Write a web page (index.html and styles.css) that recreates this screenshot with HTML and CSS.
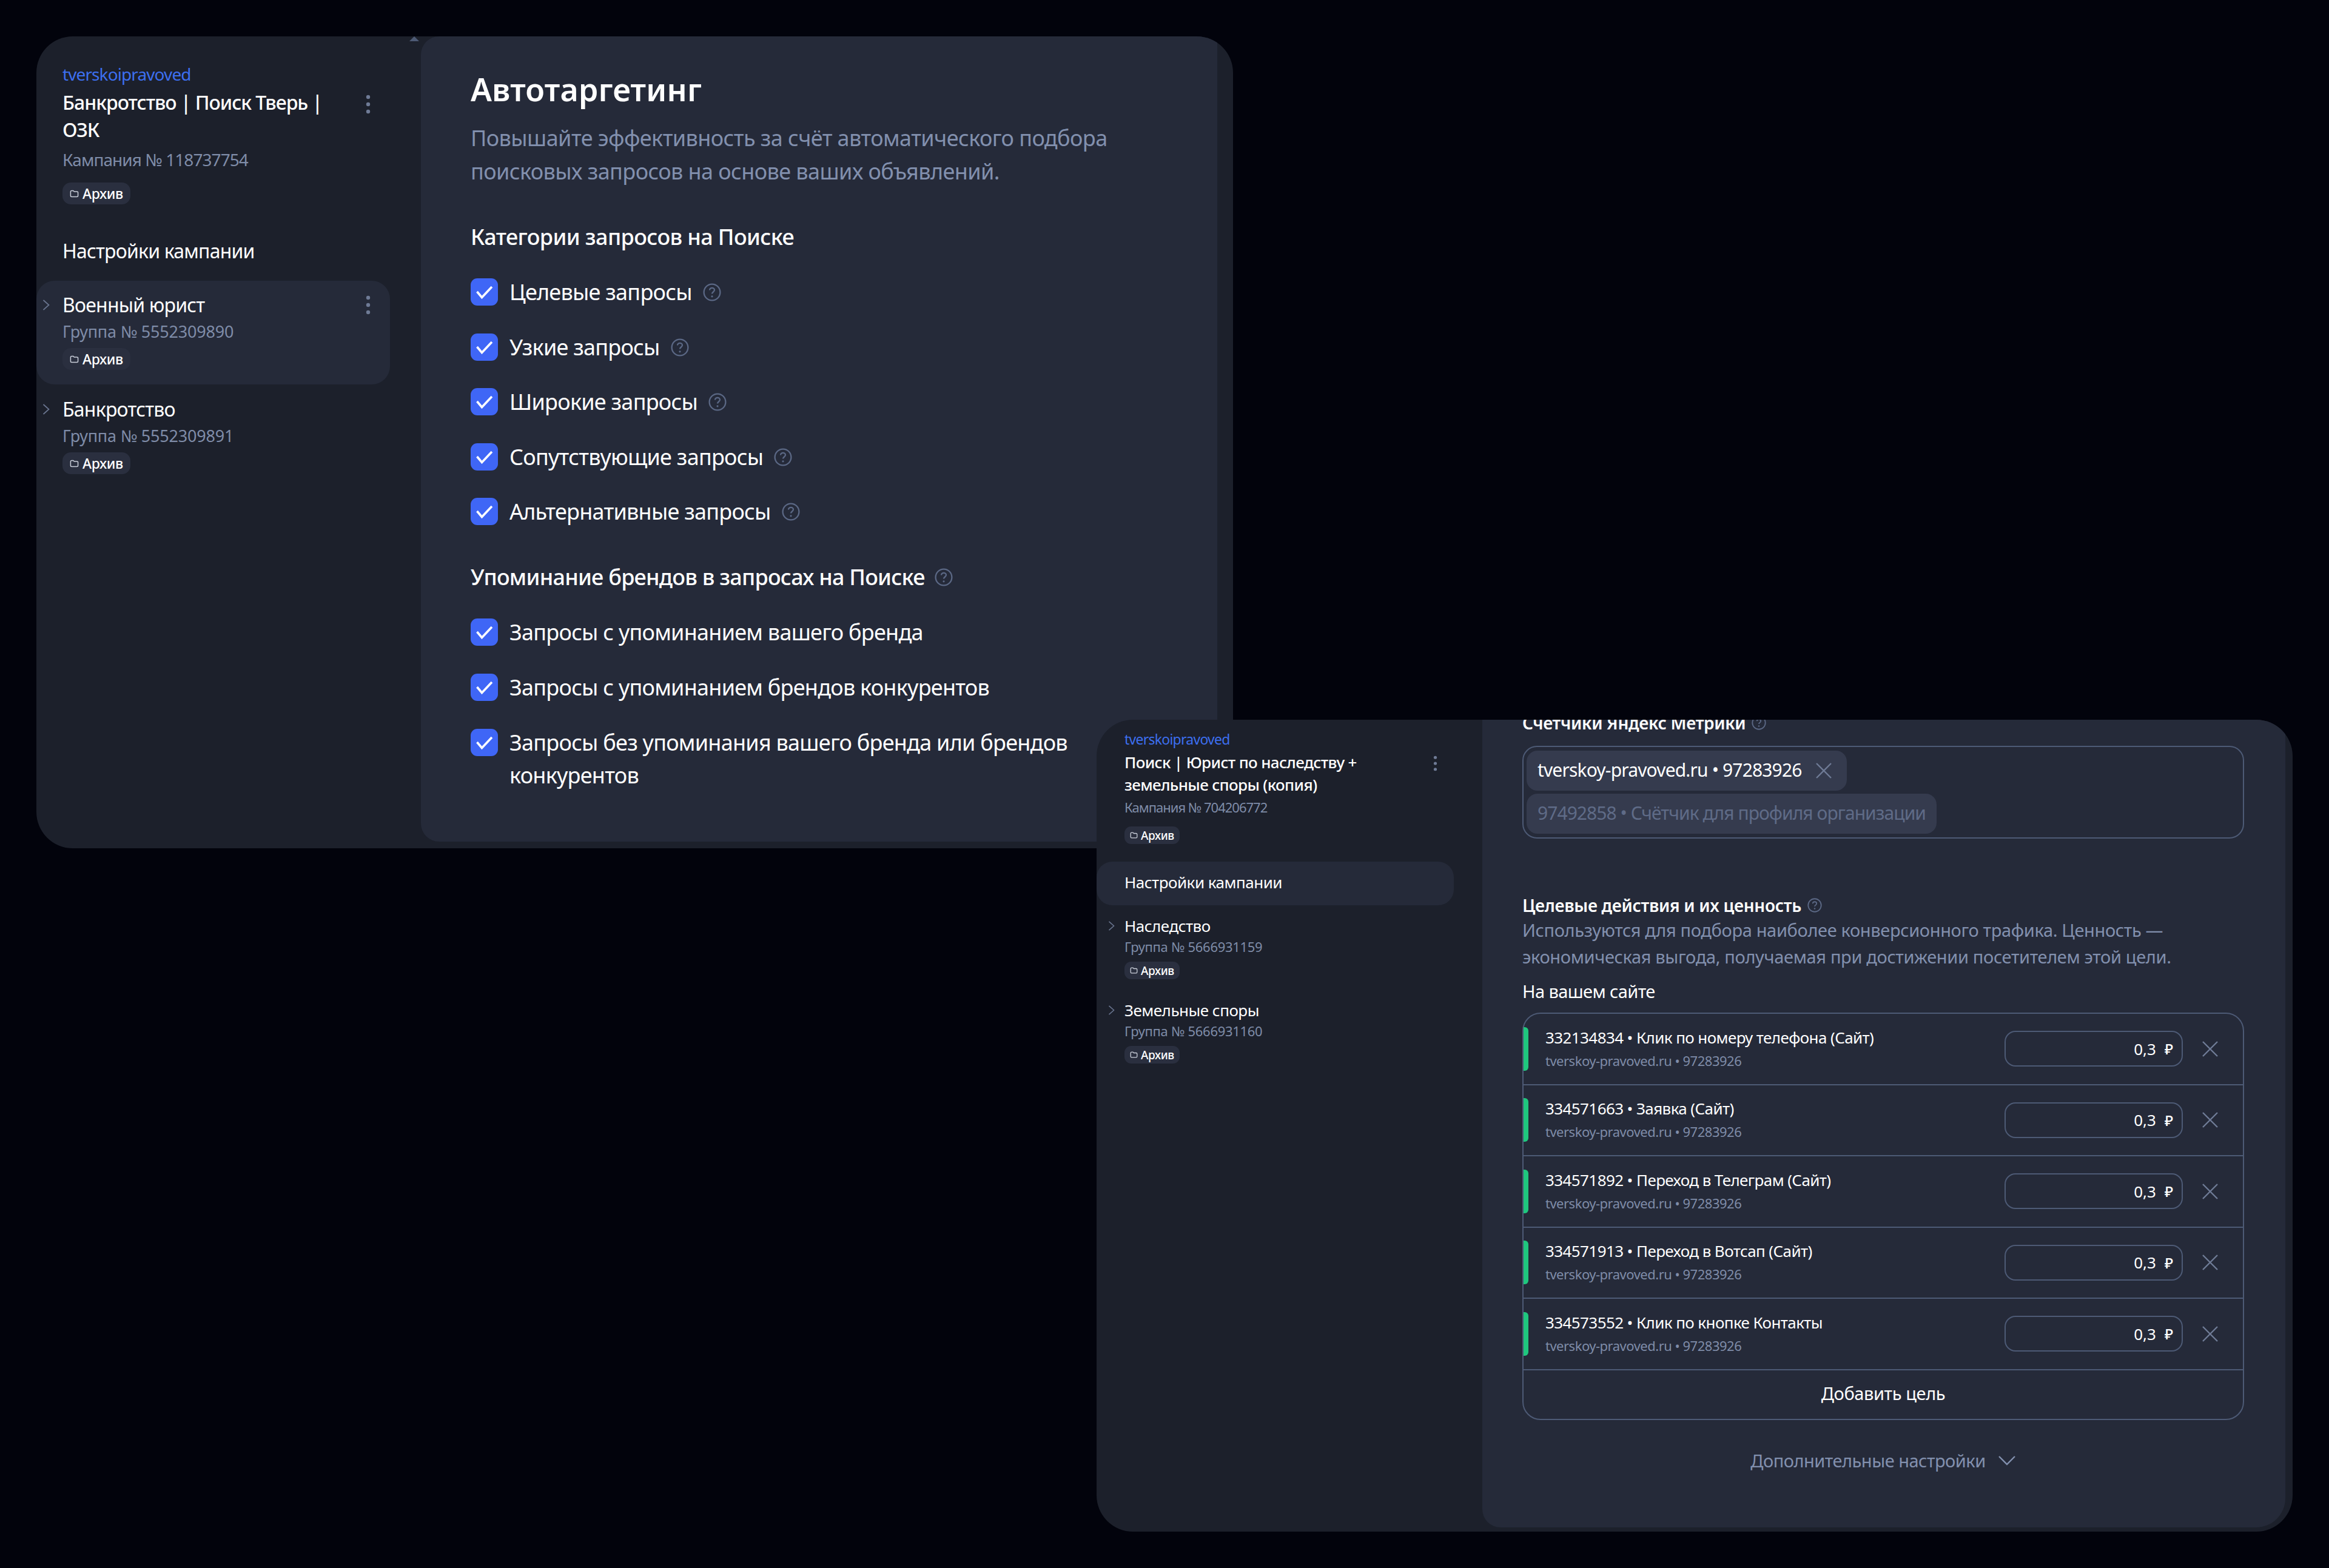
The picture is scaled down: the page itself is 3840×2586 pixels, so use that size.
FILE: index.html
```html
<!DOCTYPE html>
<html lang="ru">
<head>
    <meta charset="UTF-8">
    <title>Автотаргетинг</title>
    <link rel="stylesheet" href="styles.css">
</head>
<body>
    <svg class="sprite" xmlns="http://www.w3.org/2000/svg">
        <symbol id="folder" viewBox="0 0 16 16"><path d="M1.5 4.5C1.5 3.4 2.3 2.6 3.4 2.6h2.8l1.6 1.7h4.8c1 0 1.9.8 1.9 1.8v5.3c0 1-.9 1.9-1.9 1.9H3.4c-1.1 0-1.9-.9-1.9-1.9z" fill="none" stroke="currentColor" stroke-width="1.6"/></symbol>
        <symbol id="chevron-right" viewBox="0 0 12 18"><path d="M1.5 1l9 8-9 8" fill="none" stroke="currentColor" stroke-width="1.7"/></symbol>
        <symbol id="chevron-down" viewBox="0 0 30 18"><path d="M2 2l13 13L28 2" fill="none" stroke="currentColor" stroke-width="2.4"/></symbol>
        <symbol id="kebab" viewBox="0 0 8 32"><circle cx="4" cy="4" r="3.2" fill="currentColor"/><circle cx="4" cy="16" r="3.2" fill="currentColor"/><circle cx="4" cy="28" r="3.2" fill="currentColor"/></symbol>
        <symbol id="check" viewBox="0 0 45 45"><path d="M10.5 22l8 9.5L35 14" fill="none" stroke="currentColor" stroke-width="3.6"/></symbol>
        <symbol id="help" viewBox="0 0 30 30"><circle cx="15" cy="15" r="13.4" fill="none" stroke="currentColor" stroke-width="2.3"/><path d="M11 11.6c0-2.3 1.8-3.8 4-3.8s4 1.4 4 3.5c0 3.2-4 3.2-4 6.3" fill="none" stroke="currentColor" stroke-width="2.3"/><circle cx="15" cy="21.8" r="1.6" fill="currentColor"/></symbol>
        <symbol id="cross" viewBox="0 0 28 28"><path d="M2 2l24 24M26 2L2 26" fill="none" stroke="currentColor" stroke-width="2.4"/></symbol>
    </svg>

    <!-- первое окно -->
    <div class="window window-targeting">
        <aside class="sidebar">
            <div class="camp-head">
                <div class="camp-login">tverskoipravoved</div>
                <div class="camp-title-row">
                    <div class="camp-title">Банкротство | Поиск Тверь | ОЗК</div>
                    <svg class="kebab"><use href="#kebab"/></svg>
                </div>
                <div class="camp-id">Кампания № 118737754</div>
                <span class="badge"><svg class="badge-icon"><use href="#folder"/></svg>Архив</span>
            </div>
            <div class="nav-item">Настройки кампании</div>
            <div class="group group-active">
                <svg class="group-arrow"><use href="#chevron-right"/></svg>
                <div class="group-body">
                    <div class="group-title">Военный юрист</div>
                    <div class="group-id">Группа № 5552309890</div>
                    <span class="badge"><svg class="badge-icon"><use href="#folder"/></svg>Архив</span>
                </div>
                <svg class="kebab"><use href="#kebab"/></svg>
            </div>
            <div class="group">
                <svg class="group-arrow"><use href="#chevron-right"/></svg>
                <div class="group-body">
                    <div class="group-title">Банкротство</div>
                    <div class="group-id">Группа № 5552309891</div>
                    <span class="badge"><svg class="badge-icon"><use href="#folder"/></svg>Архив</span>
                </div>
            </div>
            <div class="scroll-up"></div>
        </aside>
        <main class="panel">
            <h1 class="panel-title">Автотаргетинг</h1>
            <p class="panel-sub">Повышайте эффективность за счёт автоматического подбора поисковых запросов на основе ваших объявлений.</p>

            <h2 class="section-title">Категории запросов на Поиске</h2>
            <div class="check-list">
                <div class="check-row">
                    <span class="checkbox"><svg><use href="#check"/></svg></span>
                    <span class="check-label">Целевые запросы</span>
                    <svg class="help"><use href="#help"/></svg>
                </div>
                <div class="check-row">
                    <span class="checkbox"><svg><use href="#check"/></svg></span>
                    <span class="check-label">Узкие запросы</span>
                    <svg class="help"><use href="#help"/></svg>
                </div>
                <div class="check-row">
                    <span class="checkbox"><svg><use href="#check"/></svg></span>
                    <span class="check-label">Широкие запросы</span>
                    <svg class="help"><use href="#help"/></svg>
                </div>
                <div class="check-row">
                    <span class="checkbox"><svg><use href="#check"/></svg></span>
                    <span class="check-label">Сопутствующие запросы</span>
                    <svg class="help"><use href="#help"/></svg>
                </div>
                <div class="check-row">
                    <span class="checkbox"><svg><use href="#check"/></svg></span>
                    <span class="check-label">Альтернативные запросы</span>
                    <svg class="help"><use href="#help"/></svg>
                </div>
            </div>

            <h2 class="section-title section-brands">Упоминание брендов в запросах на Поиске <svg class="help"><use href="#help"/></svg></h2>
            <div class="check-list">
                <div class="check-row">
                    <span class="checkbox"><svg><use href="#check"/></svg></span>
                    <span class="check-label">Запросы с упоминанием вашего бренда</span>
                </div>
                <div class="check-row">
                    <span class="checkbox"><svg><use href="#check"/></svg></span>
                    <span class="check-label">Запросы с упоминанием брендов конкурентов</span>
                </div>
                <div class="check-row">
                    <span class="checkbox"><svg><use href="#check"/></svg></span>
                    <span class="check-label check-label-wide">Запросы без упоминания вашего бренда или брендов конкурентов</span>
                </div>
            </div>
        </main>
    </div>

    <!-- второе окно -->
    <div class="window window-goals">
        <aside class="sidebar">
            <div class="camp-head">
                <div class="camp-login">tverskoipravoved</div>
                <div class="camp-title-row">
                    <div class="camp-title">Поиск | Юрист по наследству + земельные споры (копия)</div>
                    <svg class="kebab"><use href="#kebab"/></svg>
                </div>
                <div class="camp-id">Кампания № 704206772</div>
                <span class="badge"><svg class="badge-icon"><use href="#folder"/></svg>Архив</span>
            </div>
            <div class="nav-item nav-item-active">Настройки кампании</div>
            <div class="group">
                <svg class="group-arrow"><use href="#chevron-right"/></svg>
                <div class="group-body">
                    <div class="group-title">Наследство</div>
                    <div class="group-id">Группа № 5666931159</div>
                    <span class="badge"><svg class="badge-icon"><use href="#folder"/></svg>Архив</span>
                </div>
            </div>
            <div class="group">
                <svg class="group-arrow"><use href="#chevron-right"/></svg>
                <div class="group-body">
                    <div class="group-title">Земельные споры</div>
                    <div class="group-id">Группа № 5666931160</div>
                    <span class="badge"><svg class="badge-icon"><use href="#folder"/></svg>Архив</span>
                </div>
            </div>
        </aside>
        <main class="panel">
            <h3 class="field-title field-title-cut">Счетчики Яндекс Метрики <svg class="help"><use href="#help"/></svg></h3>
            <div class="counter-box">
                <div class="chip">tverskoy-pravoved.ru • 97283926 <svg class="chip-close"><use href="#cross"/></svg></div>
                <div class="chip chip-muted">97492858 • Счётчик для профиля организации</div>
            </div>

            <h3 class="field-title field-title-goals">Целевые действия и их ценность <svg class="help"><use href="#help"/></svg></h3>
            <p class="field-desc">Используются для подбора наиболее конверсионного трафика. Ценность — экономическая выгода, получаемая при достижении посетителем этой цели.</p>
            <div class="field-sub">На вашем сайте</div>

            <div class="goal-list">
                <div class="goal">
                    <span class="goal-mark"></span>
                    <div class="goal-text">
                        <div class="goal-name">332134834 • Клик по номеру телефона (Сайт)</div>
                        <div class="goal-site">tverskoy-pravoved.ru • 97283926</div>
                    </div>
                    <div class="goal-value">0,3 <span class="goal-cur">₽</span></div>
                    <svg class="goal-remove"><use href="#cross"/></svg>
                </div>
                <div class="goal">
                    <span class="goal-mark"></span>
                    <div class="goal-text">
                        <div class="goal-name">334571663 • Заявка (Сайт)</div>
                        <div class="goal-site">tverskoy-pravoved.ru • 97283926</div>
                    </div>
                    <div class="goal-value">0,3 <span class="goal-cur">₽</span></div>
                    <svg class="goal-remove"><use href="#cross"/></svg>
                </div>
                <div class="goal">
                    <span class="goal-mark"></span>
                    <div class="goal-text">
                        <div class="goal-name">334571892 • Переход в Телеграм (Сайт)</div>
                        <div class="goal-site">tverskoy-pravoved.ru • 97283926</div>
                    </div>
                    <div class="goal-value">0,3 <span class="goal-cur">₽</span></div>
                    <svg class="goal-remove"><use href="#cross"/></svg>
                </div>
                <div class="goal">
                    <span class="goal-mark"></span>
                    <div class="goal-text">
                        <div class="goal-name">334571913 • Переход в Вотсап (Сайт)</div>
                        <div class="goal-site">tverskoy-pravoved.ru • 97283926</div>
                    </div>
                    <div class="goal-value">0,3 <span class="goal-cur">₽</span></div>
                    <svg class="goal-remove"><use href="#cross"/></svg>
                </div>
                <div class="goal">
                    <span class="goal-mark"></span>
                    <div class="goal-text">
                        <div class="goal-name">334573552 • Клик по кнопке Контакты</div>
                        <div class="goal-site">tverskoy-pravoved.ru • 97283926</div>
                    </div>
                    <div class="goal-value">0,3 <span class="goal-cur">₽</span></div>
                    <svg class="goal-remove"><use href="#cross"/></svg>
                </div>
                <div class="goal-add">Добавить цель</div>
            </div>

            <div class="more">Дополнительные настройки <svg class="more-arrow"><use href="#chevron-down"/></svg></div>
        </main>
    </div>
</body>
</html>
```

FILE: styles.css
```css
html, body {
    margin: 0;
    padding: 0;
}
body {
    position: relative;
    width: 3840px;
    height: 2586px;
    overflow: hidden;
    background-color: #02030c;
    color: #fff;
    font-family: "Noto Sans", "Liberation Sans", sans-serif;
}
.sprite {
    display: none;
}

/* windows sit on a free canvas */
.window {
    position: absolute;
    display: flex;
    overflow: hidden;
    background-color: #1c202b;
    border-radius: 60px;
}
.window-targeting {
    left: 60px;
    top: 60px;
    width: 1973px;
    height: 1339px;
}
.window-goals {
    left: 1808px;
    top: 1187px;
    width: 1972px;
    height: 1339px;
    border-radius: 60px;
}
.sidebar {
    position: relative;
    flex: none;
    box-sizing: border-box;
}
.panel {
    flex: none;
    box-sizing: border-box;
    background-color: #252a39;
}
h1, h2, h3, p {
    margin: 0;
    font-weight: 500;
}

/* sidebar */
.camp-title-row {
    display: flex;
    justify-content: space-between;
}
.camp-login {
    color: #3c6ff0;
}
.camp-id, .group-id {
    color: #7f8ca8;
}
.badge {
    display: flex;
    align-items: center;
    width: fit-content;
    background-color: #2a2f3f;
    font-weight: 500;
}
.badge-icon {
    flex: none;
    color: #c9ced9;
}
.group {
    display: flex;
}
.group-arrow {
    flex: none;
    color: #6a7590;
}
.group-body {
    flex: 1;
}
.group-title, .nav-item {
    color: #fff;
}
.kebab {
    flex: none;
    color: #6f7b96;
}
.group-active, .nav-item-active {
    background-color: #252a39;
}

/* first window sizes */
.window-targeting .sidebar {
    width: 634px;
    padding-top: 47px;
}
.window-targeting .camp-head {
    padding-left: 43px;
    padding-right: 85px;
}
.window-targeting .camp-login {
    font-size: 28px;
    line-height: 30px;
    letter-spacing: -0.9px;
}
.window-targeting .camp-title-row {
    position: relative;
    margin-top: 9px;
}
.window-targeting .camp-title {
    width: 440px;
    font-size: 32px;
    line-height: 45px;
    font-weight: 500;
    letter-spacing: -1px;
}
.window-targeting .camp-title-row .kebab {
    width: 8px;
    height: 32px;
    margin-top: 10px;
    margin-right: -2px;
}
.window-targeting .camp-id {
    margin-top: 7px;
    font-size: 28px;
    line-height: 40px;
    letter-spacing: -0.95px;
}
.window-targeting .badge,
.window-goals .badge {
    margin-top: 18px;
}
.window-targeting .badge {
    gap: 6px;
    height: 36px;
    padding: 0 12px 0 12px;
    border-radius: 14px;
    font-size: 23px;
    letter-spacing: -0.4px;
}
.window-targeting .badge-icon {
    width: 15px;
    height: 15px;
}
.window-targeting .nav-item {
    margin-top: 57px;
    padding-left: 43px;
    font-size: 32px;
    line-height: 40px;
    letter-spacing: -0.8px;
}
.window-targeting .group {
    width: 583px;
    box-sizing: border-box;
    height: 171px;
    padding: 20px 32px 0 10px;
    border-radius: 30px;
}
.window-targeting .group-active {
    margin-top: 29px;
    margin-bottom: 1px;
}
.window-targeting .group-arrow {
    width: 12px;
    height: 18px;
    margin-top: 11px;
    margin-right: 21px;
}
.window-targeting .group-title {
    font-size: 32px;
    line-height: 40px;
    letter-spacing: -0.8px;
}
.window-targeting .group-id {
    margin-top: 6px;
    font-size: 27px;
    line-height: 36px;
    letter-spacing: -0.2px;
}
.window-targeting .group .badge {
    margin-top: 9px;
}
.window-targeting .group .kebab {
    width: 8px;
    height: 32px;
    margin-top: 4px;
    margin-right: 0;
}
.scroll-up {
    position: absolute;
    right: 3px;
    top: 0;
    width: 0;
    height: 0;
    border-left: 8px solid transparent;
    border-right: 8px solid transparent;
    border-bottom: 8px solid #4d5a75;
}

/* first window content */
.window-targeting .panel {
    width: 1313px;
    height: 1328px;
    padding: 55px 0 0 82px;
    border-radius: 30px 0 0 30px;
}
.panel-title {
    font-size: 52px;
    line-height: 64px;
    font-weight: 600;
    letter-spacing: 0.2px;
}
.panel-sub {
    width: 1100px;
    margin-top: 21px;
    color: #8290ae;
    font-size: 36px;
    line-height: 55px;
    font-weight: 400;
    letter-spacing: -0.58px;
}
.section-title {
    margin-top: 56px;
    font-size: 36px;
    line-height: 50px;
    letter-spacing: -0.6px;
}
.section-brands {
    display: flex;
    align-items: center;
    gap: 16px;
    margin-top: 56px;
    letter-spacing: -0.75px;
}
.check-list {
    display: flex;
    flex-direction: column;
    gap: 36.6px;
    margin-top: 39px;
}
.check-row {
    display: flex;
    align-items: flex-start;
    font-size: 36px;
    line-height: 54px;
    letter-spacing: -0.75px;
}
.checkbox {
    flex: none;
    width: 45px;
    height: 45px;
    margin-top: 4px;
    margin-right: 19px;
    border-radius: 11px;
    background-color: #3f66f6;
    color: #fff;
}
.checkbox svg {
    display: block;
    width: 45px;
    height: 45px;
}
.check-label-wide {
    width: 940px;
}
.help {
    flex: none;
    width: 30px;
    height: 30px;
    color: #5b6885;
}
.check-row .help {
    margin: 12px 0 0 18px;
}

/* second window sizes */
.window-goals .sidebar {
    width: 636px;
    padding-top: 19px;
}
.window-goals .camp-head {
    padding-left: 46px;
    padding-right: 74px;
}
.window-goals .camp-login {
    font-size: 23px;
    line-height: 26px;
    letter-spacing: -0.75px;
}
.window-goals .camp-title-row {
    margin-top: 7px;
}
.window-goals .camp-title {
    width: 420px;
    font-size: 26px;
    line-height: 37px;
    font-weight: 500;
    letter-spacing: -0.65px;
}
.window-goals .camp-title-row .kebab {
    width: 7px;
    height: 26px;
    margin-top: 7px;
}
.window-goals .camp-id {
    margin-top: 3px;
    font-size: 22px;
    line-height: 30px;
    letter-spacing: -1px;
}
.window-goals .badge {
    gap: 5px;
    height: 29px;
    margin-top: 17px;
    padding: 0 9px 0 9px;
    border-radius: 11px;
    font-size: 19px;
    letter-spacing: -0.4px;
}
.window-goals .badge-icon {
    width: 13px;
    height: 13px;
}
.window-goals .nav-item {
    width: 589px;
    box-sizing: border-box;
    height: 72px;
    margin-top: 29px;
    padding-left: 46px;
    border-radius: 26px;
    font-size: 26px;
    line-height: 68px;
    letter-spacing: -0.5px;
}
.window-goals .group {
    padding: 18px 0 0 19px;
}
.window-goals .group + .group {
    padding-top: 35px;
}
.window-goals .group-arrow {
    width: 11px;
    height: 16px;
    margin-top: 8px;
    margin-right: 16px;
}
.window-goals .group-title {
    font-size: 26px;
    line-height: 32px;
    letter-spacing: -0.5px;
}
.window-goals .group-id {
    margin-top: 4px;
    font-size: 22px;
    line-height: 28px;
    letter-spacing: -0.3px;
}
.window-goals .group .badge {
    margin-top: 11px;
}

/* second window content */
.window-goals .panel {
    width: 1324px;
    height: 1332px;
    padding: 0 68px 0 66px;
    border-radius: 0 0 48px 30px;
}
.field-title {
    display: flex;
    align-items: center;
    gap: 10px;
    font-size: 28px;
    line-height: 36px;
    font-weight: 600;
    letter-spacing: -0.3px;
}
.field-title .help {
    width: 24px;
    height: 24px;
}
.field-title-cut {
    margin-top: -13px;
}
.field-title-goals {
    margin-top: 92px;
}
.counter-box {
    display: flex;
    flex-direction: column;
    align-items: flex-start;
    gap: 5px;
    margin-top: 20px;
    padding: 6px 5px;
    border: 2px solid #4d5a75;
    border-radius: 24px;
}
.chip {
    display: flex;
    align-items: center;
    gap: 22px;
    height: 66px;
    padding: 0 24px 4px 18px;
    box-sizing: border-box;
    border-radius: 18px;
    background-color: #353b4e;
    font-size: 30px;
    letter-spacing: -0.85px;
}
.chip-muted {
    padding-right: 18px;
    color: #5f6b87;
    letter-spacing: -0.95px;
}
.chip-close {
    width: 28px;
    height: 28px;
    margin-top: 4px;
    color: #6f7b96;
}
.field-desc {
    margin-top: 1px;
    color: #8290ae;
    font-size: 29px;
    line-height: 44px;
    font-weight: 400;
    letter-spacing: -0.35px;
}
.field-sub {
    margin-top: 15px;
    font-size: 29px;
    line-height: 40px;
    letter-spacing: -0.6px;
}
.goal-list {
    margin-top: 15px;
    border: 2px solid #4d5a75;
    border-radius: 30px;
}
.goal {
    display: flex;
    align-items: center;
    box-sizing: border-box;
    height: 117.5px;
    border-bottom: 2px solid #4d5a75;
}
.goal-mark {
    flex: none;
    width: 8px;
    height: 72px;
    border-radius: 0 6px 6px 0;
    background-color: #1fc77e;
}
.goal-text {
    margin-left: 28px;
}
.goal-name {
    font-size: 26px;
    line-height: 38px;
    letter-spacing: -0.6px;
}
.goal-site {
    color: #7f8ca8;
    font-size: 22px;
    line-height: 38px;
    letter-spacing: -0.5px;
}
.goal-value {
    display: flex;
    align-items: center;
    justify-content: flex-end;
    gap: 14px;
    box-sizing: border-box;
    width: 294px;
    height: 59px;
    margin-left: auto;
    padding-right: 14px;
    border: 2px solid #4d5a75;
    border-radius: 18px;
    font-size: 26px;
}
.goal-cur {
    font-size: 24px;
    font-weight: 500;
}
.goal-remove {
    flex: none;
    width: 28px;
    height: 28px;
    margin: 0 40px 0 31px;
    color: #6f7b96;
}
.goal-add {
    height: 80px;
    color: #fff;
    font-size: 29px;
    line-height: 76px;
    text-align: center;
    letter-spacing: -0.4px;
}
.more {
    display: flex;
    align-items: center;
    justify-content: center;
    gap: 20px;
    margin-top: 47px;
    color: #8290ae;
    font-size: 29px;
    line-height: 40px;
    letter-spacing: -0.5px;
}
.more-arrow {
    width: 30px;
    height: 18px;
}
```
